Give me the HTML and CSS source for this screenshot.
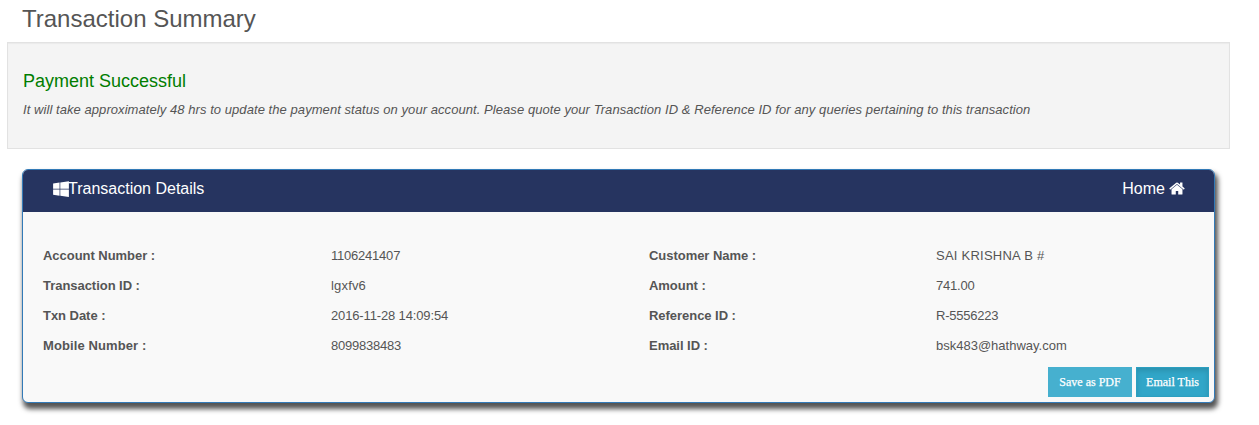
FILE: index.html
```html
<!DOCTYPE html>
<html lang="en">
<head>
<meta charset="utf-8">
<title>Transaction Summary</title>
<link rel="stylesheet" href="styles.css">
</head>
<body>
<h1 class="title">Transaction Summary</h1>
<section class="notice">
  <h2 class="notice-title">Payment Successful</h2>
  <p class="notice-text">It will take approximately 48 hrs to update the payment status on your account. Please quote your Transaction ID &amp; Reference ID for any queries pertaining to this transaction</p>
</section>
<section class="card">
  <header class="card-head">
    <div class="head-item"><svg class="icon" viewBox="64 0 1664 1792"><path d="M746 1006v651l-682-94v-557h682zm0-743v659h-682v-565zm982 743v786l-907-125v-661h907zm0-878v794h-907v-669z"/></svg><span class="head-name">Transaction Details</span></div>
    <a class="head-item home"><span class="head-home">Home</span><svg class="icon" viewBox="64 0 1664 1792"><path d="M1472 992v480q0 26-19 45t-45 19h-384v-384h-256v384h-384q-26 0-45-19t-19-45v-480q0-1 .5-3t.5-3l575-474 575 474q1 2 1 6zm223-69l-62 74q-8 9-21 11h-3q-13 0-21-7l-692-577-692 577q-12 8-24 7-13-2-21-11l-62-74q-8-10-7-23.5t11-21.5l719-599q32-26 76-26t76 26l244 204v-195q0-14 9-23t23-9h192q14 0 23 9t9 23v408l219 182q10 8 11 21.5t-7 23.5z"/></svg></a>
  </header>
  <div class="details">
    <b>Account Number :</b><span class="num">1106241407</span><b>Customer Name :</b><span class="caps">SAI KRISHNA B #</span>
    <b>Transaction ID :</b><span class="word">lgxfv6</span><b>Amount :</b><span class="num">741.00</span>
    <b>Txn Date :</b><span class="date">2016-11-28 14:09:54</span><b>Reference ID :</b><span class="num">R-5556223</span>
    <b class="mobile">Mobile Number :</b><span class="num">8099838483</span><b>Email ID :</b><span>bsk483@hathway.com</span>
  </div>
  <div class="actions">
    <button class="btn save">Save as PDF</button>
    <button class="btn email">Email This</button>
  </div>
</section>
</body>
</html>
```
FILE: styles.css
```css
* { box-sizing: border-box; }
body {
  margin: 0;
  min-height: 425px;
  background: #fff;
  color: #555;
  font-family: "Liberation Sans", Arial, sans-serif;
  font-size: 13px;
}
.title {
  margin: 0;
  height: 42px;
  padding: 5px 0 0 22px;
  font-size: 24px;
  font-weight: 400;
  line-height: 28px;
}
.notice {
  width: 1223px;
  height: 107px;
  margin-left: 7px;
  padding: 28px 15px 0;
  background: #f4f4f4;
  border: 1px solid #e2e2e2;
  box-shadow: inset 0 1px 1px rgba(0, 0, 0, .04);
}
.notice-title {
  margin: 0;
  color: #007d00;
  font-size: 18px;
  font-weight: 400;
  line-height: 20px;
}
.notice-text {
  margin: 9px 0 0;
  font-style: italic;
  letter-spacing: .064px;
  line-height: 20px;
  white-space: nowrap;
}
.card {
  width: 1193px;
  height: 234px;
  margin: 20px 0 0 22px;
  background: #f9f9f9;
  border: 1px solid #337ab7;
  border-radius: 6px;
  box-shadow: 2px 5px 5px 1px #555;
}
.card-head {
  display: flex;
  justify-content: space-between;
  height: 42px;
  padding: 9px 29px 0 30px;
  background: #263460;
  border-radius: 5px 5px 0 0;
  color: #fff;
  font-size: 16px;
  line-height: 20px;
}
.head-item { display: flex; align-items: flex-start; }
.head-name { margin-left: -1px; }
.home { gap: 4px; }
.icon {
  width: 16px;
  height: 17px;
  margin-top: .5px;
  fill: #fff;
}
.details {
  display: grid;
  grid-template-columns: 288px 318px 287px 1fr;
  grid-auto-rows: 30px;
  height: 155px;
  padding: 29px 0 0 20px;
  line-height: 30px;
}
.details b { letter-spacing: -.04px; }
.details .mobile { letter-spacing: .1px; }
.num { letter-spacing: -.22px; }
.date { letter-spacing: -.14px; }
.caps { letter-spacing: .24px; }
.word { letter-spacing: .17px; }
.actions {
  display: flex;
  justify-content: flex-end;
  gap: 4px;
  padding-right: 5px;
}
.btn {
  height: 30px;
  padding: 0;
  border: 1px solid #46b0cf;
  background: #46b0cf;
  color: #fff;
  font: 12px "Liberation Serif", "Times New Roman", serif;
  -webkit-text-stroke: .25px #fff;
}
.save { width: 84px; }
.email {
  width: 73px;
  border-color: #2c9fc0;
  background: #31a6c8;
  box-shadow: inset 0 3px 5px rgba(0, 0, 0, .125);
}
```
